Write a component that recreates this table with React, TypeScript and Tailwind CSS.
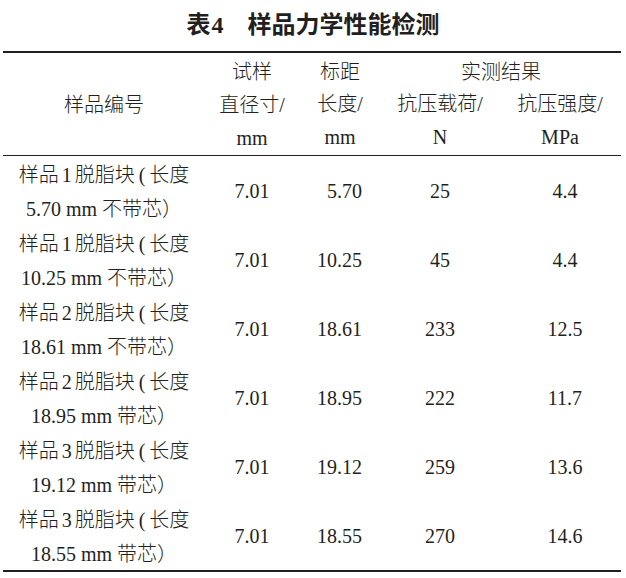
import React from "react";

const font = { fontFamily: '"Liberation Serif", "Noto Sans CJK SC", serif' };

const rows = [
  ["1", "5.70 mm 不带芯）", "7.01", "5.70", "25", "4.4"],
  ["1", "10.25 mm 不带芯）", "7.01", "10.25", "45", "4.4"],
  ["2", "18.61 mm 不带芯）", "7.01", "18.61", "233", "12.5"],
  ["2", "18.95 mm 带芯）", "7.01", "18.95", "222", "11.7"],
  ["3", "19.12 mm 带芯）", "7.01", "19.12", "259", "13.6"],
  ["3", "18.55 mm 带芯）", "7.01", "18.55", "270", "14.6"],
];

export default function App() {
  return (
    <div
      className="w-[626px] h-[578px] bg-white text-[#231f20] font-['Liberation_Serif','Noto_Sans_CJK_SC',serif]"
      style={font}
    >
      <div className="h-[51px] flex items-center justify-center pb-[1px] text-[24px] font-bold">
        <span>表</span>
        <span className="ml-[1px]">4</span>
        <span className="ml-[24px]">样品力学性能检测</span>
      </div>
      <div className="ml-[3px] w-[618px] border-t-[2.5px] border-b-[2.5px] border-[#231f20] text-[20px] font-light">
        {/* header */}
        <div className="flex h-[103px] border-b border-[#231f20]">
          <div className="w-[202px] flex items-center justify-center pt-[1px]">样品编号</div>
          <div className="w-[94px] flex flex-col items-center">
            <div className="h-[36px] pt-[3px] leading-[33px]">试样</div>
            <div className="h-[32px] leading-[32px]">直径寸/</div>
            <div className="h-[35px] leading-[35px]">mm</div>
          </div>
          <div className="w-[82px] flex flex-col items-center">
            <div className="h-[35px] pt-[3px] leading-[32px]">标距</div>
            <div className="h-px w-[67px] bg-[#231f20] -ml-[6px]"></div>
            <div className="h-[32px] leading-[32px]">长度/</div>
            <div className="h-[35px] leading-[35px]">mm</div>
          </div>
          <div className="flex-1 flex flex-col">
            <div className="h-[35px] pt-[3px] leading-[32px] text-center">实测结果</div>
            <div className="h-px ml-[4px] mr-[4px] bg-[#231f20]"></div>
            <div className="flex">
              <div className="w-[118px] flex flex-col items-center">
                <div className="h-[32px] leading-[32px]">抗压载荷/</div>
                <div className="h-[35px] leading-[35px]">N</div>
              </div>
              <div className="flex-1 flex flex-col items-center">
                <div className="h-[32px] leading-[32px]">抗压强度/</div>
                <div className="h-[35px] leading-[35px]">MPa</div>
              </div>
            </div>
          </div>
        </div>
        {/* rows */}
        {rows.map((r, i) => (
          <div key={i} className="flex h-[69px] items-center">
            <div className="w-[202px] flex flex-col items-center pt-[3px]">
              <div className="leading-[34px] whitespace-nowrap flex">
                <span>样品</span>
                <span className="mx-[3px]">{r[0]}</span>
                <span>脱脂块</span>
                <span className="ml-[4px] mr-[4px]">(</span>
                <span>长度</span>
              </div>
              <div className="leading-[34px] whitespace-nowrap">{r[1]}</div>
            </div>
            <div className="w-[94px] text-center">{r[2]}</div>
            <div className="w-[82px] text-right pr-[19px]">{r[3]}</div>
            <div className="w-[118px] text-center">{r[4]}</div>
            <div className="flex-1 text-center pl-[10px]">{r[5]}</div>
          </div>
        ))}
      </div>
    </div>
  );
}
